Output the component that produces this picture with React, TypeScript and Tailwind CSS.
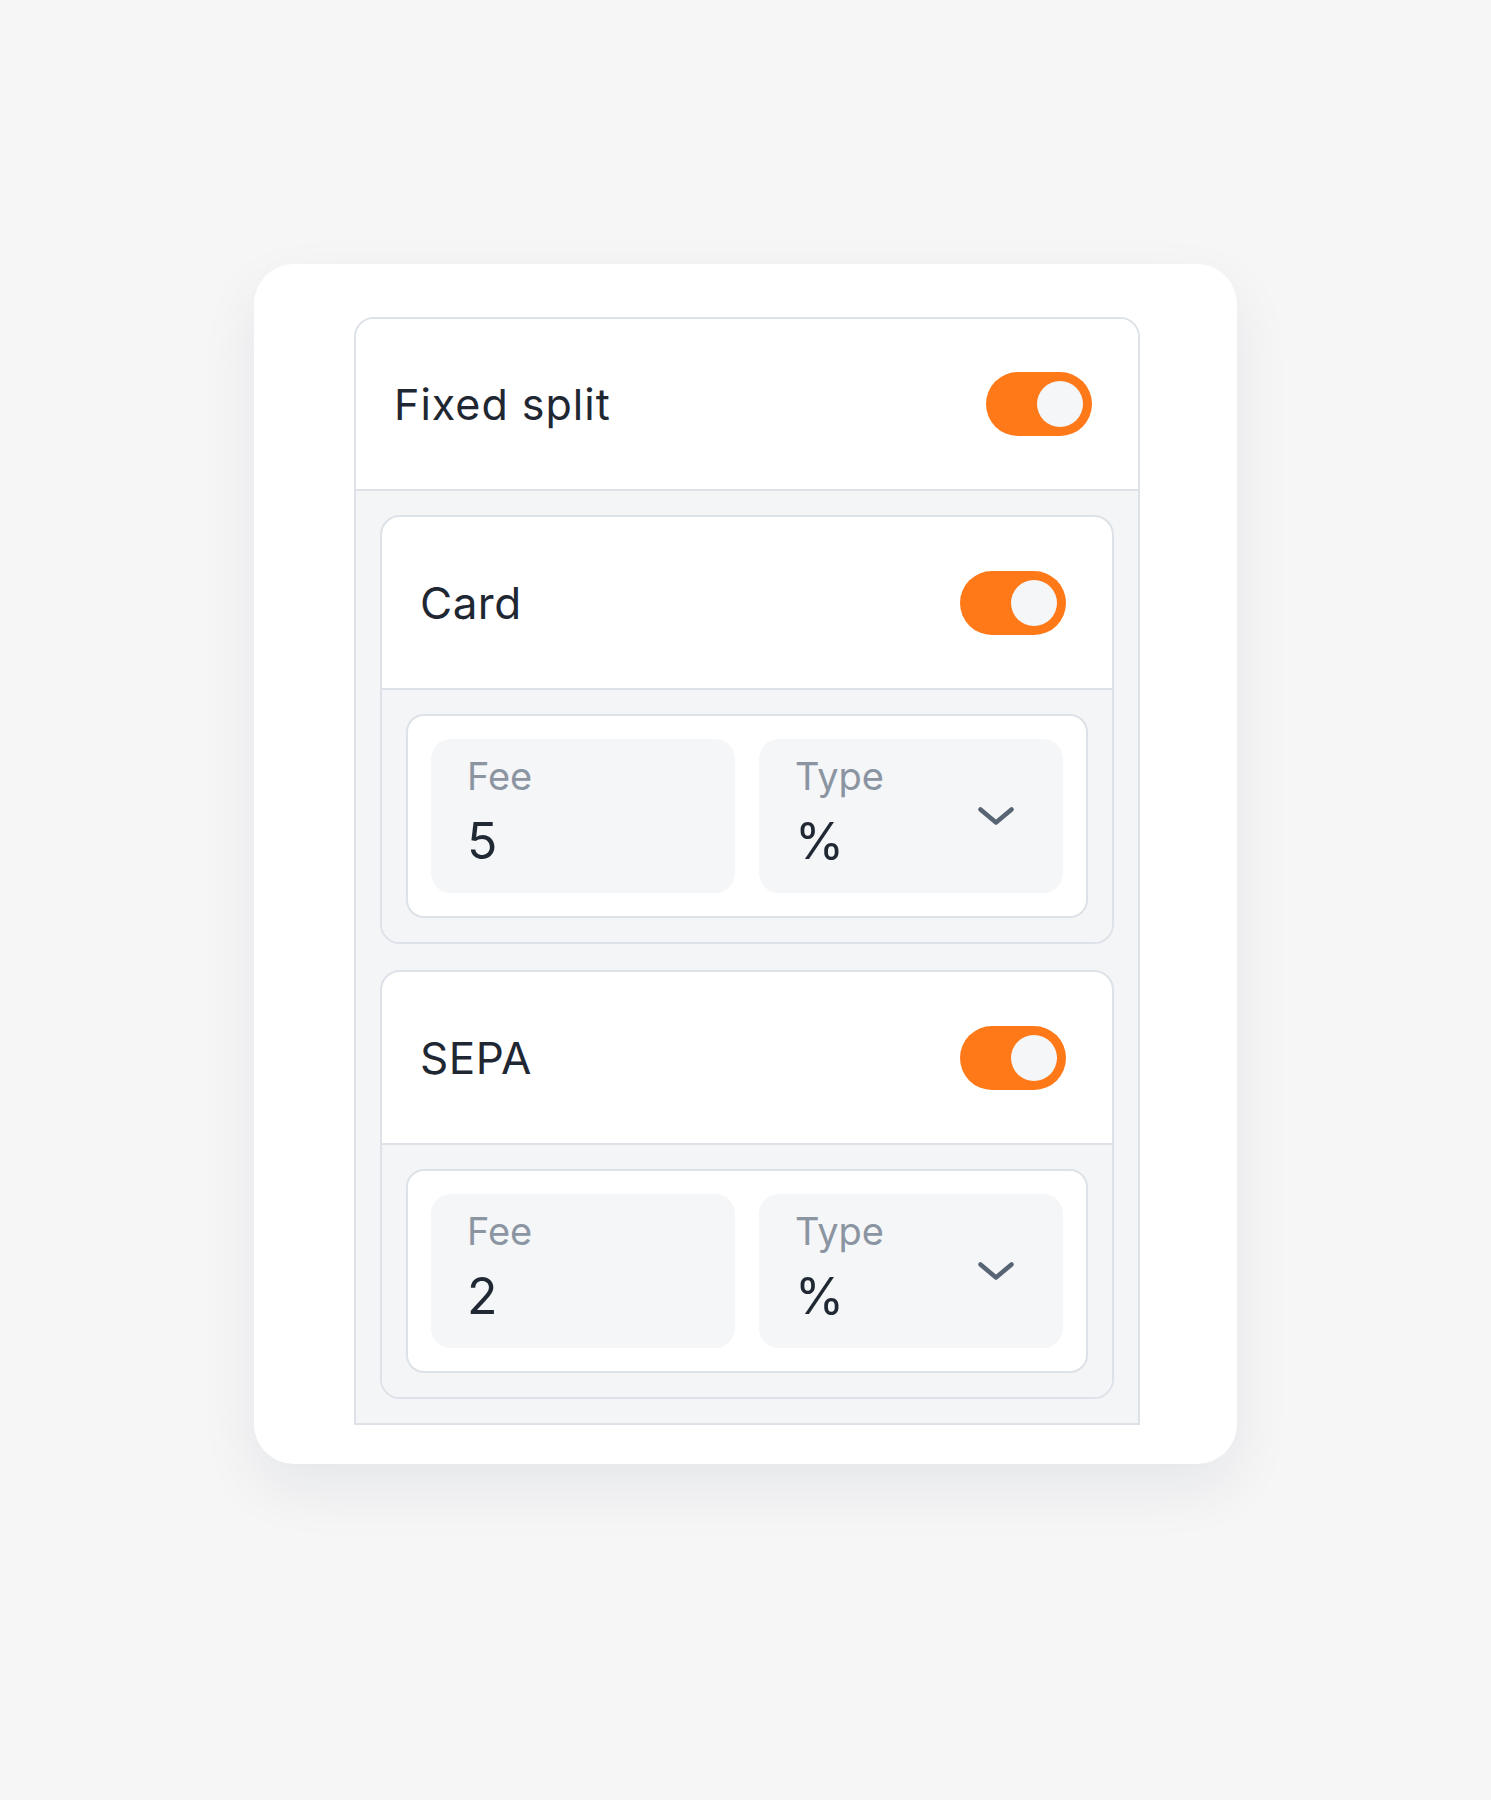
import { useState } from "react";

function Toggle({ defaultOn = true }: { defaultOn?: boolean }) {
  const [on, setOn] = useState(defaultOn);
  return (
    <button
      type="button"
      role="switch"
      aria-checked={on}
      onClick={() => setOn(!on)}
      className={`flex h-[64px] w-[106px] items-center rounded-full p-[9px] ${
        on ? "justify-end bg-[#ff7918]" : "justify-start bg-[#d8dde3]"
      }`}
    >
      <span className="h-[46px] w-[46px] rounded-full bg-[#f5f6f8]" />
    </button>
  );
}

function Chevron() {
  return (
    <svg width="36" height="18" viewBox="0 0 36 18" fill="none">
      <path
        d="M2.5 2.5 L18 15.5 L33.5 2.5"
        stroke="#566473"
        strokeWidth="4.5"
        strokeLinecap="round"
        strokeLinejoin="round"
      />
    </svg>
  );
}

function Field({
  label,
  value,
  select,
}: {
  label: string;
  value: string;
  select?: boolean;
}) {
  return (
    <div className="flex h-[154px] items-center justify-between rounded-[20px] bg-[#f5f6f8] pl-[36px] pr-[49px]">
      <div className="flex h-full flex-col gap-[12px] pt-[14px]">
        <span className="text-[38px] leading-[46px] text-[#8b95a2]">
          {label}
        </span>
        <span className="text-[50px] leading-[60px] text-[#1f2833]">
          {value}
        </span>
      </div>
      {select ? <Chevron /> : null}
    </div>
  );
}

function Method({ label, fee }: { label: string; fee: string }) {
  return (
    <div className="overflow-hidden rounded-[20px] border-2 border-[#dde2e8] bg-white">
      <div className="flex h-[173px] items-center justify-between border-b-2 border-[#dde2e8] pl-[38px] pr-[46px]">
        <span className="text-[44px] tracking-[0.5px] text-[#1f2733]">
          {label}
        </span>
        <Toggle />
      </div>
      <div className="bg-[#f3f5f7] p-[24px]">
        <div className="grid grid-cols-2 gap-[24px] rounded-[18px] border-2 border-[#dde2e8] bg-white p-[23px]">
          <Field label="Fee" value={fee} />
          <Field label="Type" value="%" select />
        </div>
      </div>
    </div>
  );
}

export default function App() {
  return (
    <main className="min-h-screen bg-[#f6f6f7] pt-[264px] font-['Inter',sans-serif]">
      <div className="mx-auto w-[983px] rounded-[40px] bg-white pb-[39px] pl-[100px] pr-[97px] pt-[53px] shadow-[0_24px_60px_rgba(15,23,42,0.07)]">
        <section className="overflow-hidden rounded-t-[20px] border-2 border-[#dde2e8]">
          <div className="flex h-[172px] items-center justify-between border-b-2 border-[#dde2e8] bg-white pl-[38px] pr-[46px]">
            <span className="text-[43px] tracking-[1px] text-[#1f2733]">
              Fixed split
            </span>
            <Toggle />
          </div>
          <div className="flex flex-col gap-[26px] bg-[#f3f5f7] p-[24px]">
            <Method label="Card" fee="5" />
            <Method label="SEPA" fee="2" />
          </div>
        </section>
      </div>
    </main>
  );
}
